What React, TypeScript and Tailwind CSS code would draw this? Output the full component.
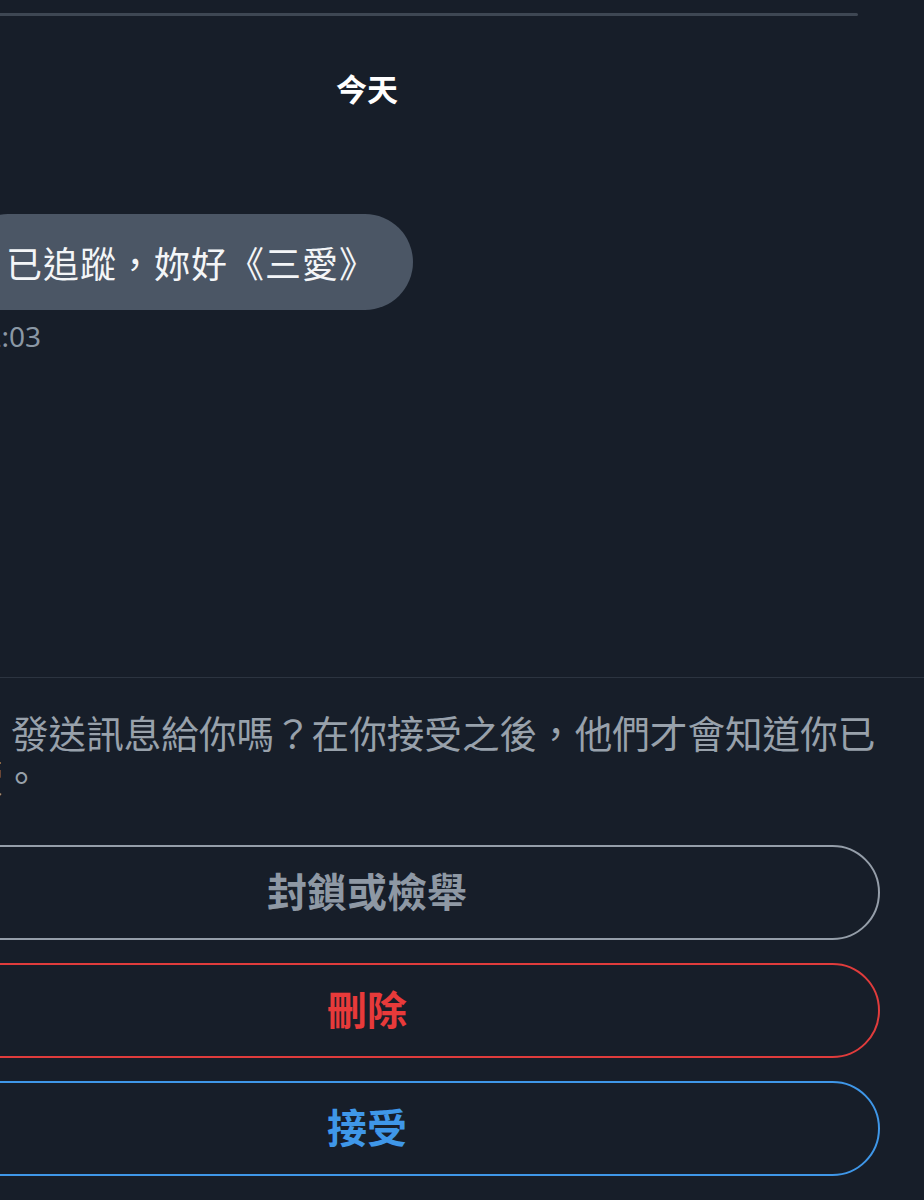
import React from "react";

const ActionButton: React.FC<{ label: string; tone: "gray" | "red" | "blue" }> = ({
  label,
  tone,
}) => {
  const toneClass =
    tone === "gray"
      ? "border-[#959ea9] text-[#8e98a4]"
      : tone === "red"
      ? "border-[#e03c3c] text-[#e83a3a]"
      : "border-[#3f97e8] text-[#3f97e8]";

  return (
    <button
      type="button"
      className={`h-[95px] w-full rounded-full border-2 bg-transparent pb-[6px] text-[40px] font-bold leading-none ${toneClass}`}
    >
      {label}
    </button>
  );
};

export default function App() {
  return (
    <div
      className="flex h-[1200px] w-[924px] flex-col overflow-hidden bg-[#171e29]"
      style={{ fontFamily: '"Noto Sans CJK TC", "Noto Sans", sans-serif' }}
    >
      {/* conversation */}
      <div className="flex-1">
        <div className="-ml-[146px] flex w-[1026px] flex-col">
          <div className="mt-[13px] mr-[22px] h-[3px] rounded-full bg-[#3e4753]" />

          <div className="mt-[52px] text-center text-[31px] font-semibold leading-[40px] text-white">
            今天
          </div>

          <div className="mt-[106px] ml-[106px] flex h-[96px] w-fit items-center rounded-[48px] rounded-bl-md bg-[#4b5665] pl-[46px] pr-[37px] text-[36px] leading-none tracking-[1px] text-[#f3f5f7]">
            已追蹤，妳好《三愛》
          </div>

          <div
            className="mt-[8px] w-[187px] whitespace-nowrap text-right text-[28px] leading-[36px] text-[#8b98a5]"
            style={{ fontFamily: '"Noto Sans", "Noto Sans CJK TC", sans-serif' }}
          >
            下午12:03
          </div>
        </div>
      </div>

      {/* message request prompt */}
      <div className="border-t border-[#2c3440] pb-[24px]">
        <div className="-ml-[146px] flex w-[1026px] flex-col">
          <p className="pt-[32px] text-[37.6px] leading-[44px] text-[#98a1ab]">
            <span className="block whitespace-nowrap pl-[157px]">
              發送訊息給你嗎？在你接受之後，他們才會知道你已
            </span>
            <span className="block whitespace-nowrap pl-[111px]">讀。</span>
          </p>

          <div className="mt-[47px] flex flex-col gap-[23px]">
            <ActionButton label="封鎖或檢舉" tone="gray" />
            <ActionButton label="刪除" tone="red" />
            <ActionButton label="接受" tone="blue" />
          </div>
        </div>
      </div>
    </div>
  );
}
